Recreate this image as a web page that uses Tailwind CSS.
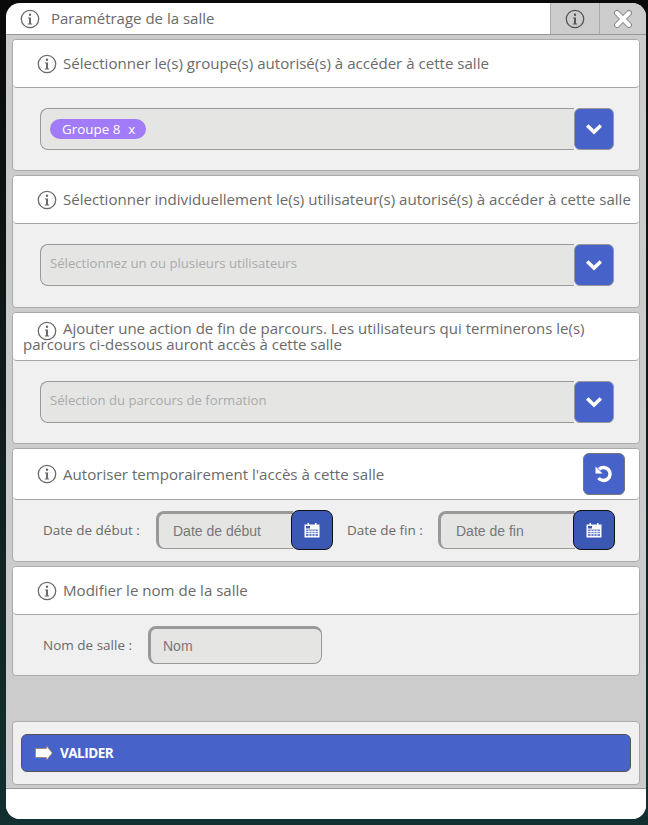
<!DOCTYPE html>
<html lang="fr">
<head>
    <meta charset="UTF-8">
    <meta name="viewport" content="width=device-width, initial-scale=1.0">
    <title>Paramétrage de la salle</title>
    <script src="https://cdn.jsdelivr.net/npm/@tailwindcss/browser@4"></script>
</head>
<body class="w-[648px] h-[825px] overflow-hidden bg-gradient-to-b from-[#0a0a0a] to-[#123030] font-['Open_Sans',sans-serif] text-[#6a6a6a]">
    <svg width="0" height="0" class="absolute">
        <symbol id="info" viewBox="0 0 20 20">
            <circle cx="10" cy="10" r="8.7" fill="none" stroke="currentColor" stroke-width="1.3"/>
            <circle cx="10" cy="5.7" r="1.2" fill="currentColor"/>
            <path d="M8 8.6h3v6h1.2v1H7.8v-1H9v-5H8z" fill="currentColor"/>
        </symbol>
        <symbol id="chevron" viewBox="0 0 16 12">
            <path d="M1.200 2.500L8 9l6.800-6.500" fill="none" stroke="currentColor" stroke-width="3.600"/>
        </symbol>
        <symbol id="cal" viewBox="0 0 16 16">
            <path d="M.5 2.500h3V1h1.500v1.500h6V1h1.500v1.500h3V15.500H.5z" fill="#fff"/>
            <path d="M2 4h4v2.500H2z" fill="#3c58b5"/>
            <path d="M2 7.500h12v6.500H2z" fill="#6f84cf"/>
            <path d="M2 9.500h12M2 11.500h12M5 7.500v6.500M8 7.500v6.500M11 7.500v6.500" stroke="#fff" stroke-width=".8"/>
        </symbol>
    </svg>

    <!-- Fenetre -->
    <div class="ml-[6px] mt-[3px] w-[640px] h-[816px] rounded-[14px] bg-white overflow-hidden flex flex-col">
        <!-- Titre -->
        <div class="h-[31px] flex shrink-0">
            <div class="flex-1 flex items-center pl-[14px] text-[15px] gap-[11px]">
                <svg class="w-[20px] h-[20px]"><use href="#info"/></svg>
                <span>Paramétrage de la salle</span>
            </div>
            <div class="w-[49px] bg-[#ccc] border-l border-[#aaa] flex items-center justify-center">
                <svg class="w-[20px] h-[20px] text-[#555]"><use href="#info"/></svg>
            </div>
            <div class="w-[47px] bg-[#ccc] border-l border-[#aaa] flex items-center justify-center">
                <svg width="22" height="22" viewBox="0 0 22 22"><path d="M5 5l12 12M17 5L5 17" stroke="#888" stroke-width="6" stroke-linecap="round"/><path d="M5 5l12 12M17 5L5 17" stroke="#fff" stroke-width="4" stroke-linecap="round"/></svg>
            </div>
        </div>

        <!-- Contenu -->
        <div class="h-[755px] bg-[#ccc] border-y border-[#999] shrink-0 px-[6px] pt-[4px] flex flex-col">
            <!-- Groupes -->
            <section class="h-[132px] mb-[4px] shrink-0 bg-[#f0f0f0] border border-[#aaa] rounded-[4px] overflow-hidden">
                <div class="h-[48px] bg-white border-b border-[#a5a5a5] rounded-b-[4px] flex items-center pl-[24px] gap-[6px] text-[15.080px]">
                    <svg class="w-[20px] h-[20px]"><use href="#info"/></svg>
                    <span>Sélectionner le(s) groupe(s) autorisé(s) à accéder à cette salle</span>
                </div>
                <div class="mt-[20px] ml-[27px] mr-[25px] h-[42px] flex">
                    <div class="flex-1 bg-[#e5e5e4] border border-[#999] border-r-0 rounded-l-[8px] flex items-center pl-[9px]">
                        <span class="h-[20px] w-[96px] rounded-full bg-[#a27cf8] text-white text-[13.400px] flex items-center pl-[12px] gap-[8px]"><span>Groupe 8</span><span>x</span></span>
                    </div>
                    <div class="w-[40px] bg-[#4763c9] border border-[#999] rounded-[6px] flex items-center justify-center text-white">
                        <svg class="w-[16px] h-[12px]"><use href="#chevron"/></svg>
                    </div>
                </div>
            </section>

            <!-- Utilisateurs -->
            <section class="h-[133px] mb-[4px] shrink-0 bg-[#f0f0f0] border border-[#aaa] rounded-[4px] overflow-hidden">
                <div class="h-[48px] bg-white border-b border-[#a5a5a5] rounded-b-[4px] flex items-center pl-[24px] gap-[6px] text-[15.080px] whitespace-nowrap">
                    <svg class="w-[20px] h-[20px] shrink-0"><use href="#info"/></svg>
                    <span>Sélectionner individuellement le(s) utilisateur(s) autorisé(s) à accéder à cette salle</span>
                </div>
                <div class="mt-[20px] ml-[27px] mr-[25px] h-[42px] flex">
                    <div class="flex-1 bg-[#e5e5e4] border border-[#999] border-r-0 rounded-l-[8px] flex items-center pl-[9px] pb-[2px] text-[13.150px] text-[#aaa]">Sélectionnez un ou plusieurs utilisateurs</div>
                    <div class="w-[40px] bg-[#4763c9] border border-[#999] rounded-[6px] flex items-center justify-center text-white">
                        <svg class="w-[16px] h-[12px]"><use href="#chevron"/></svg>
                    </div>
                </div>
            </section>

            <!-- Parcours -->
            <section class="h-[132px] mb-[4px] shrink-0 bg-[#f0f0f0] border border-[#aaa] rounded-[4px] overflow-hidden">
                <div class="h-[48px] bg-white border-b border-[#a5a5a5] rounded-b-[4px] px-[10px] pt-[8px] text-[15px] leading-[15.500px]">
                    <svg class="inline w-[20px] h-[20px] ml-[14px] mr-[2px] -my-[4px] align-[-3px]"><use href="#info"/></svg>
                    Ajouter une action de fin de parcours. Les utilisateurs qui terminerons le(s) parcours ci-dessous auront accès à cette salle
                </div>
                <div class="mt-[20px] ml-[27px] mr-[25px] h-[42px] flex">
                    <div class="flex-1 bg-[#e5e5e4] border border-[#999] border-r-0 rounded-l-[8px] flex items-center pl-[9px] pb-[2px] text-[13.150px] text-[#aaa]">Sélection du parcours de formation</div>
                    <div class="w-[40px] bg-[#4763c9] border border-[#999] rounded-[6px] flex items-center justify-center text-white">
                        <svg class="w-[16px] h-[12px]"><use href="#chevron"/></svg>
                    </div>
                </div>
            </section>

            <!-- Dates -->
            <section class="h-[114px] mb-[4px] shrink-0 bg-[#f0f0f0] border border-[#aaa] rounded-[4px] overflow-hidden">
                <div class="h-[51px] bg-white border-b border-[#a5a5a5] rounded-b-[4px] flex items-center pl-[24px] pr-[14px] gap-[6px] text-[15.080px]">
                    <svg class="w-[20px] h-[20px]"><use href="#info"/></svg>
                    <span class="flex-1">Autoriser temporairement l'accès à cette salle</span>
                    <button class="w-[42px] h-[42px] bg-[#4763c9] border border-[#777] rounded-[6px] flex items-center justify-center">
                        <svg width="20" height="20" viewBox="0 0 20 20" fill="none"><path d="M5 5.300A6.500 6.500 0 1 1 4.500 14" stroke="#fff" stroke-width="3.400"/><path d="M1.500 2.500v7h7z" fill="#fff"/></svg>
                    </button>
                </div>
                <div class="flex items-center mt-[10px] h-[40px] text-[13.500px] pl-[30px]">
                    <span class="w-[113px] shrink-0">Date de début :</span>
                    <div class="w-[177px] h-[38px] shrink-0 flex">
                        <div class="w-[137px] bg-[#e5e5e4] border border-[#999] border-l-[3px] border-t-[3px] border-r-0 rounded-l-[8px] flex items-center pl-[14px] font-['Liberation_Sans',sans-serif] text-[14px] text-[#777] whitespace-nowrap">Date de début</div>
                        <div class="w-[42px] -ml-[2px] h-[40px] -mt-[1px] shrink-0 bg-[#3c58b5] border border-[#111] rounded-[8px] flex items-center justify-center"><svg class="w-[16px] h-[16px]"><use href="#cal"/></svg></div>
                    </div>
                    <span class="w-[105px] shrink-0 pl-[14px]">Date de fin :</span>
                    <div class="w-[177px] h-[38px] shrink-0 flex">
                        <div class="w-[137px] bg-[#e5e5e4] border border-[#999] border-l-[3px] border-t-[3px] border-r-0 rounded-l-[8px] flex items-center pl-[15px] font-['Liberation_Sans',sans-serif] text-[14px] text-[#777] whitespace-nowrap">Date de fin</div>
                        <div class="w-[42px] -ml-[2px] h-[40px] -mt-[1px] shrink-0 bg-[#3c58b5] border border-[#111] rounded-[8px] flex items-center justify-center"><svg class="w-[16px] h-[16px]"><use href="#cal"/></svg></div>
                    </div>
                </div>
            </section>

            <!-- Nom -->
            <section class="h-[110px] shrink-0 bg-[#f0f0f0] border border-[#aaa] rounded-[4px] overflow-hidden">
                <div class="h-[48px] bg-white border-b border-[#a5a5a5] rounded-b-[4px] flex items-center pl-[24px] gap-[6px] text-[15.080px]">
                    <svg class="w-[20px] h-[20px]"><use href="#info"/></svg>
                    <span>Modifier le nom de la salle</span>
                </div>
                <div class="flex items-center mt-[11px] pl-[30px] text-[13.500px]">
                    <span class="w-[105px]">Nom de salle :</span>
                    <div class="w-[174px] h-[38px] bg-[#e5e5e4] border border-[#999] border-l-[3px] border-t-[3px] rounded-[8px] flex items-center pl-[12px] font-['Liberation_Sans',sans-serif] text-[14px] text-[#777]">Nom</div>
                </div>
            </section>

            <!-- Valider -->
            <section class="mt-[45px] h-[64px] shrink-0 bg-[#f0f0f0] border border-[#aaa] rounded-[4px] px-[8px] pt-[12px]">
                <button class="w-full h-[38px] bg-[#4763c9] border border-[#555] rounded-[6px] flex items-center pl-[13px] gap-[7px] text-white text-[13.500px] font-bold tracking-[-0.5px]">
                    <svg width="18" height="16" viewBox="0 0 18 16"><path d="M.5 3.500h11V.8L17.300 8l-5.800 7.200v-2.700H.5z" fill="#fff" stroke="#a8683c" stroke-width=".6"/></svg>
                    <span class="pt-[1px]">VALIDER</span>
                </button>
            </section>
        </div>

        <!-- Pied -->
        <div class="flex-1 bg-white"></div>
    </div>
</body>
</html>
